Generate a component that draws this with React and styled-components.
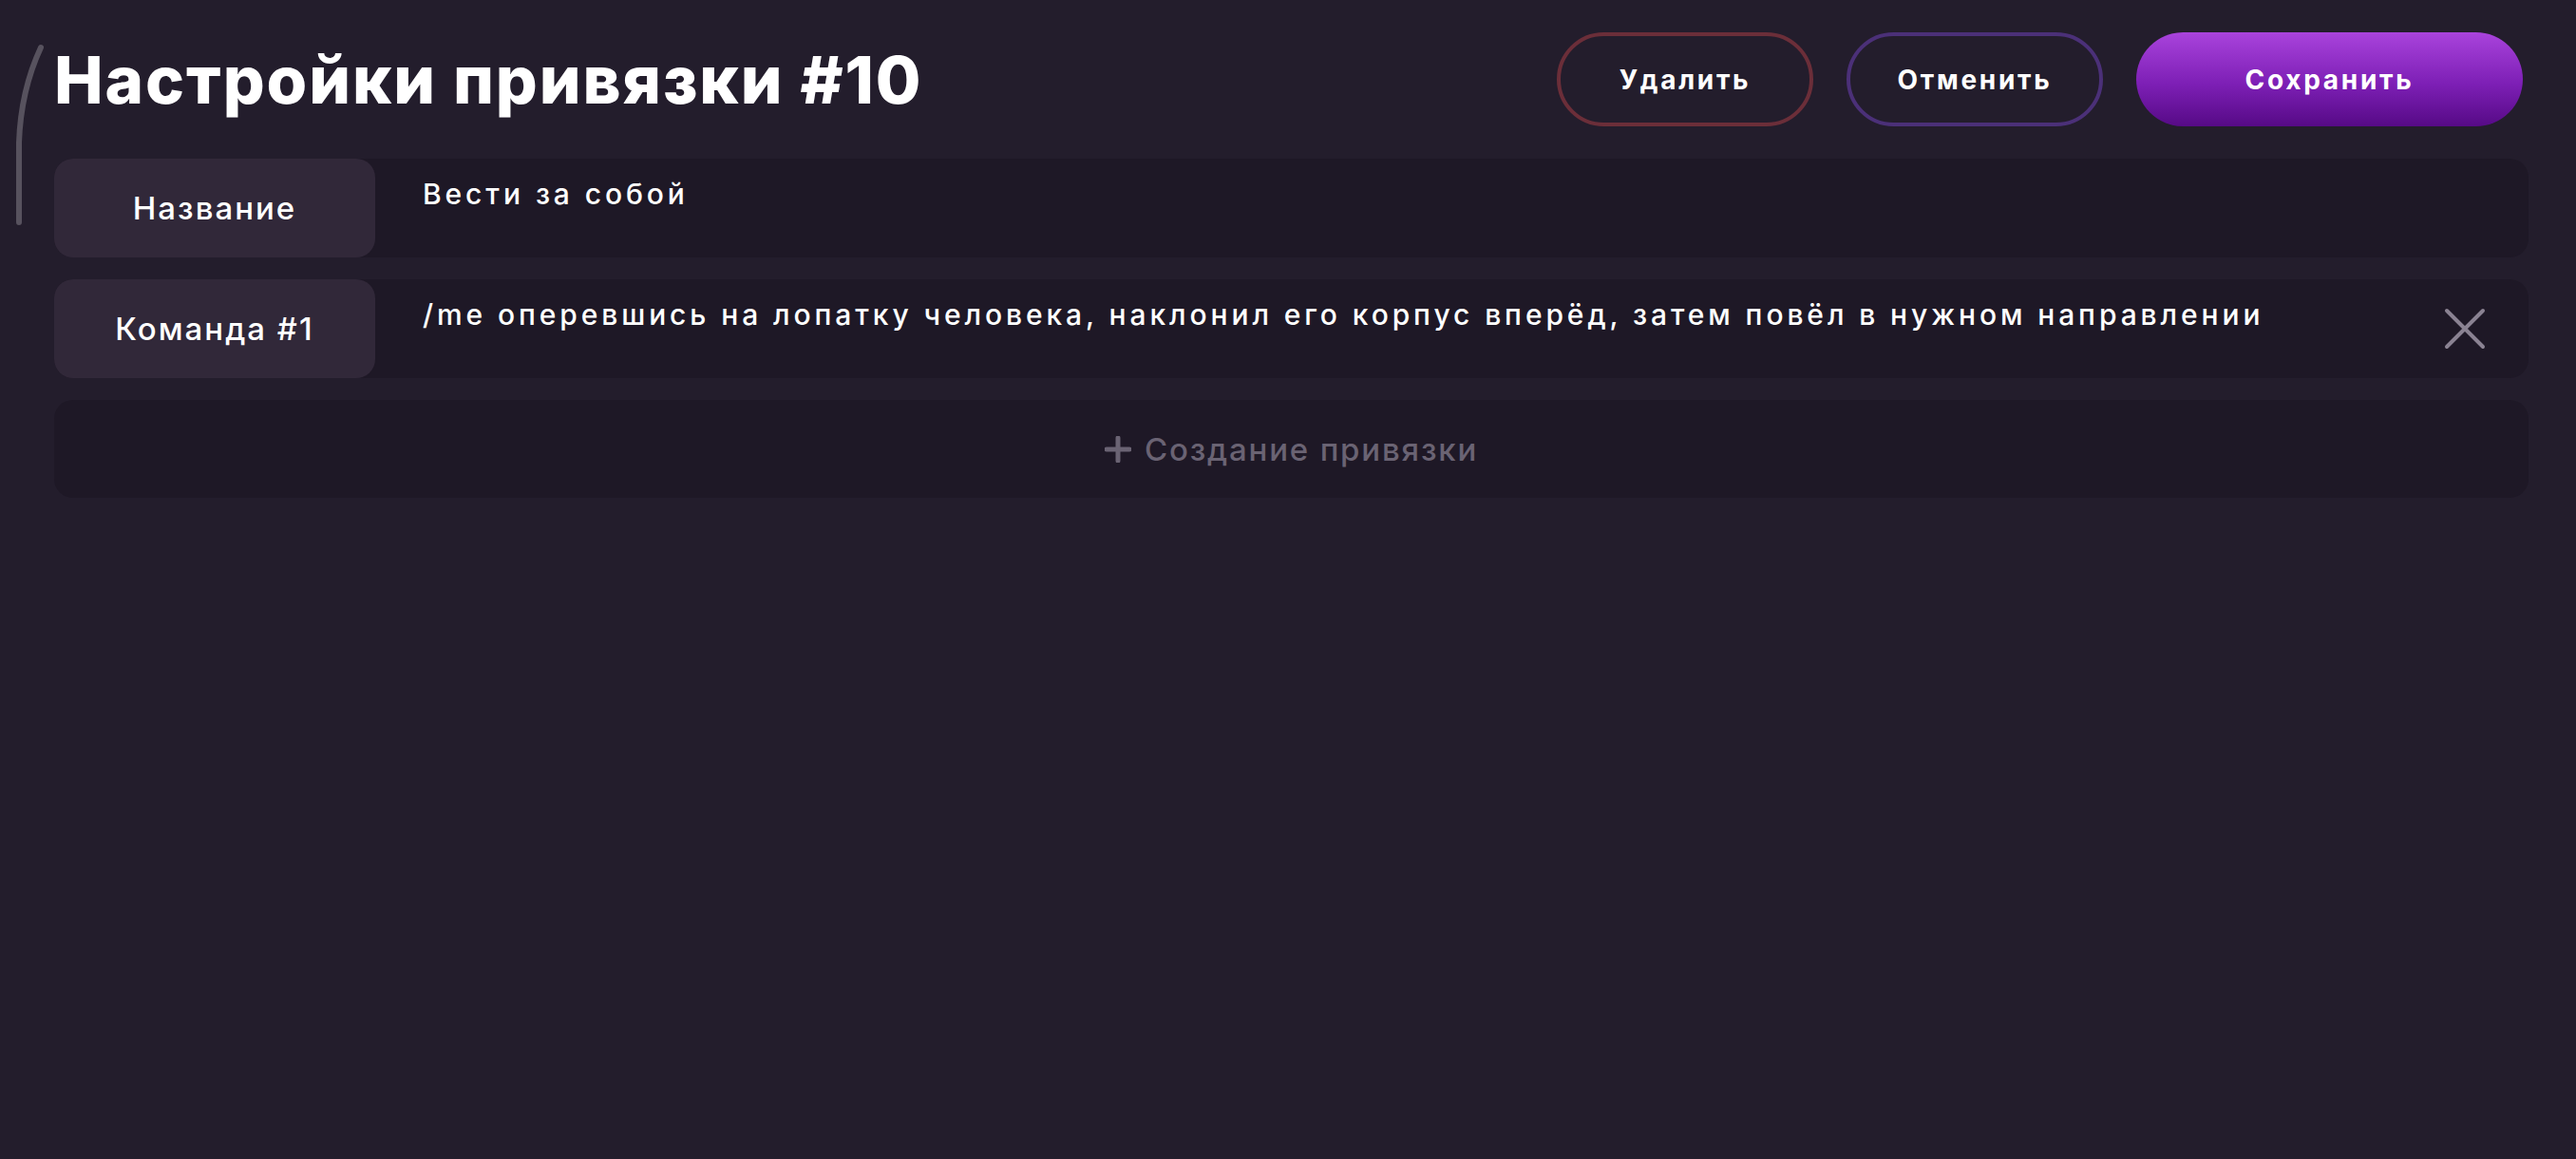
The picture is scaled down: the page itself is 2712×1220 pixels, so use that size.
import React from 'react';
import styled, { createGlobalStyle } from 'styled-components';

const GlobalStyle = createGlobalStyle`
	body {
		margin: 0;
		background: #231d2c;
		font-family: Inter, 'Noto Sans', sans-serif;
		color: #ffffff;
	}
`

const Page = styled.div`
	position: relative;
	min-height: 100vh;
	box-sizing: border-box;
	padding: 34px 50px 0 57px;
`

const ScrollMark = styled.svg`
	position: absolute;
	left: 0;
	top: 0;
`

const Header = styled.div`
	display: flex;
	align-items: center;
	justify-content: space-between;
	height: 99px;
`

const Title = styled.h1`
	margin: 0;
	font-size: 69px;
	font-weight: 800;
	letter-spacing: 1.9px;
`

const Actions = styled.div`
	display: flex;
	gap: 35px;
	margin-right: 6px;
`

const Button = styled.button`
	box-sizing: border-box;
	width: ${p => p.$width}px;
	height: 99px;
	border-radius: 50px;
	border: ${p => p.$filled ? 'none' : `4px solid ${p.$border}`};
	background: ${p => p.$filled ? 'linear-gradient(180deg, #a943dc 0%, #7d1fb5 55%, #560a86 100%)' : 'transparent'};
	color: #ffffff;
	font-family: Inter, 'Noto Sans', sans-serif;
	font-size: 28px;
	font-weight: 700;
	letter-spacing: 2.7px;
	cursor: pointer;
`

const Rows = styled.div`
	display: flex;
	flex-direction: column;
	gap: 23px;
	margin-top: 34px;
`

const Row = styled.div`
	display: flex;
	height: 104px;
	background: #1e1826;
	border-radius: 20px;
`

const Label = styled.div`
	flex: 0 0 338px;
	display: flex;
	align-items: center;
	justify-content: center;
	background: #312839;
	border-radius: 20px;
	font-size: 33px;
	font-weight: 500;
	letter-spacing: 2px;
`

const Value = styled.div`
	flex: 1;
	padding: 18px 0 0 50px;
	font-size: 30px;
	line-height: 1.3;
	font-weight: 500;
	letter-spacing: 3.9px;
	white-space: nowrap;
`

const Remove = styled.button`
	align-self: center;
	display: flex;
	margin-right: 45px;
	padding: 0;
	border: none;
	background: none;
	cursor: pointer;
`

const CreateRow = styled.div`
	display: flex;
	align-items: center;
	justify-content: center;
	gap: 14px;
	height: 103px;
	background: #1e1826;
	border-radius: 20px;
	color: #6a6373;
	font-size: 33px;
	font-weight: 500;
	letter-spacing: 1.8px;
`

const App = () => {
	return (
		<Page>
			<GlobalStyle />
			<ScrollMark width="60" height="250" viewBox="0 0 60 250">
				<path d="M 43 50 Q 22 95 20 150 L 20 234" stroke="#57525e" strokeWidth="6" fill="none" strokeLinecap="round" />
			</ScrollMark>

			<Header>
				<Title>Настройки привязки #10</Title>
				<Actions>
					<Button $width={270} $border="#6b2e39">Удалить</Button>
					<Button $width={270} $border="#4b3078">Отменить</Button>
					<Button $width={407} $filled>Сохранить</Button>
				</Actions>
			</Header>

			<Rows>
				<Row>
					<Label>Название</Label>
					<Value>Вести за собой</Value>
				</Row>
				<Row>
					<Label>Команда #1</Label>
					<Value>/me оперевшись на лопатку человека, наклонил его корпус вперёд, затем повёл в нужном направлении</Value>
					<Remove>
						<svg width="44" height="44" viewBox="0 0 44 44">
							<path d="M 3 3 L 41 41 M 41 3 L 3 41" stroke="#8a8292" strokeWidth="4" strokeLinecap="round" />
						</svg>
					</Remove>
				</Row>
				<CreateRow>
					<svg width="28" height="28" viewBox="0 0 28 28">
						<path d="M 14 2 L 14 26 M 2 14 L 26 14" stroke="#6a6373" strokeWidth="5" strokeLinecap="round" />
					</svg>
					Создание привязки
				</CreateRow>
			</Rows>
		</Page>
	);
}

export default App;
